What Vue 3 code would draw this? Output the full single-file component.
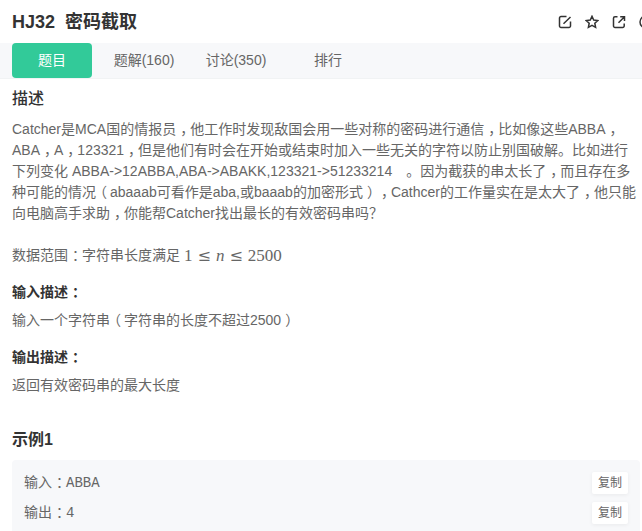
<script setup>
import { h } from 'vue'

const tabs = [
  { label: '题目', active: true },
  { label: '题解(160)' },
  { label: '讨论(350)' },
  { label: '排行' },
]

const description =
  'Catcher是MCA国的情报员，他工作时发现敌国会用一些对称的密码进行通信，比如像这些ABBA，ABA，A，123321，但是他们有时会在开始或结束时加入一些无关的字符以防止别国破解。比如进行下列变化 ABBA->12ABBA,ABA->ABAKK,123321->51233214\u3000。因为截获的串太长了，而且存在多种可能的情况（abaaab可看作是aba,或baaab的加密形式），Cathcer的工作量实在是太大了，他只能向电脑高手求助，你能帮Catcher找出最长的有效密码串吗？'

const samples = [
  { label: '输入：', value: 'ABBA' },
  { label: '输出：', value: '4' },
]

// Sets full-width commas, colons and brackets in the middle of their cell.
const Han = ({ text }) =>
  text
    .split(/([，：（）])/)
    .filter(Boolean)
    .map((part) => (/^[，：（）]$/.test(part) ? h('span', { class: 'punct' }, part) : part))
Han.props = ['text']
</script>

<template>
  <main class="page">
    <header class="head">
      <h1 class="title"><span>HJ32</span><span>密码截取</span></h1>
      <div class="actions">
        <button type="button" class="icon" aria-label="编辑">
          <svg viewBox="0 0 14 14"><path d="M8.500 1.500H3A1.500 1.500 0 0 0 1.500 3v8A1.500 1.500 0 0 0 3 12.500h8a1.500 1.500 0 0 0 1.500-1.500V6.500M5.500 8.700l7-6.700" /></svg>
        </button>
        <button type="button" class="icon" aria-label="收藏">
          <svg viewBox="0 0 14 14"><path d="M7 1.300l1.700 3.700 4.200.5-3.100 2.700.8 4.100L7 10.400l-3.600 1.900.8-4.100L1.100 5.500 5.300 5z" /></svg>
        </button>
        <button type="button" class="icon" aria-label="分享">
          <svg viewBox="0 0 14 14"><path d="M5.500 1.800H3A1.500 1.500 0 0 0 1.500 3.300V11A1.500 1.500 0 0 0 3 12.500h7.700a1.500 1.500 0 0 0 1.500-1.500V8.500M8.200 1.800h4.300V6M12.300 2L6.500 7.800" /></svg>
        </button>
        <button type="button" class="icon" aria-label="帮助">
          <svg viewBox="0 0 14 14"><circle cx="7" cy="7" r="6" /><path d="M7 6.500v4M7 3.500v1.200" /></svg>
        </button>
      </div>
    </header>

    <nav class="tabs">
      <a v-for="tab in tabs" :key="tab.label" href="#" class="tab" :class="{ active: tab.active }">{{ tab.label }}</a>
    </nav>

    <article class="body">
      <h2 class="section">描述</h2>
      <p class="text"><Han :text="description" /></p>
      <p class="text range">
        <span><Han text="数据范围：字符串长度满足" /></span>
        <span class="math"><span>1</span><span class="rel">≤</span><i>n</i><span class="rel">≤</span><span>2500</span></span>
      </p>

      <h3 class="sub"><Han text="输入描述：" /></h3>
      <p class="text"><Han text="输入一个字符串（字符串的长度不超过2500）" /></p>

      <h3 class="sub"><Han text="输出描述：" /></h3>
      <p class="text"><Han text="返回有效密码串的最大长度" /></p>

      <h2 class="section example">示例1</h2>
      <div class="sample">
        <div v-for="row in samples" :key="row.label" class="row">
          <span class="field"><Han :text="row.label" /><code>{{ row.value }}</code></span>
          <button type="button" class="copy">复制</button>
        </div>
      </div>
    </article>
  </main>
</template>

<style>
body {
  margin: 0;
  background: #fff;
}
.punct {
  font-feature-settings: "halt";
  padding: 0 3px 0 4px;
}
</style>

<style scoped>
.page {
  height: 100vh;
  overflow: hidden;
  font-family: "Liberation Sans", "Noto Sans CJK SC", sans-serif;
  font-size: 14px;
  line-height: 21px;
  color: #666;
  text-spacing-trim: space-all;
}
h1, h2, h3, p {
  margin: 0;
}
.head {
  display: flex;
  align-items: center;
  justify-content: space-between;
  height: 43px;
  padding-left: 12px;
}
.title {
  display: flex;
  gap: 10px;
  padding-top: 2px;
  font-size: 18px;
  line-height: 27px;
  color: #333;
}
.actions {
  display: flex;
  flex: none;
  gap: 13px;
  margin-right: -11px;
}
.icon {
  width: 14px;
  height: 14px;
  padding: 0;
  border: 0;
  background: none;
}
.icon svg {
  display: block;
  fill: none;
  stroke: #333;
  stroke-width: 1.5;
}
.tabs {
  display: flex;
  gap: 12px;
  padding: 0 12px;
  background: #f7f8fa;
  border-bottom: 1px solid #f1f3f4;
}
.tab {
  width: 80px;
  border-radius: 4px;
  line-height: 35px;
  text-align: center;
  color: #666;
  text-decoration: none;
}
.tab.active {
  background: #32ca99;
  color: #fff;
}
.body {
  padding: 8px 2px 0 12px;
}
.section {
  font-size: 16px;
  font-weight: 500;
  line-height: 24px;
  color: #333;
}
.section + .text {
  margin-top: 8px;
}
.range {
  display: flex;
  align-items: center;
  gap: 4px;
  margin-top: 21px;
}
.math {
  display: flex;
  gap: 5px;
  font-family: "Liberation Serif", serif;
  font-size: 17px;
}
.rel {
  font-family: "DejaVu Serif", serif;
  font-size: 16px;
}
.sub {
  margin-top: 16px;
  margin-bottom: 7px;
  font-size: 14px;
  font-weight: 700;
  color: #333;
}
.example {
  margin-top: 32px;
  font-weight: 700;
}
.sample {
  display: flex;
  flex-direction: column;
  gap: 8px;
  margin-top: 8px;
  padding: 12px;
  border-radius: 4px;
  background: #f7f8fa;
}
.row {
  display: flex;
  align-items: center;
  justify-content: space-between;
}
code {
  font-family: "Liberation Mono", monospace;
  font-size: 14px;
}
.copy {
  width: 36px;
  height: 22px;
  padding: 0;
  border: 0;
  border-radius: 2px;
  background: #fff;
  box-shadow: 0 1px 4px rgba(0, 0, 0, 0.06);
  font: 12px/22px "Liberation Sans", "Noto Sans CJK SC", sans-serif;
  color: #666;
}
</style>
